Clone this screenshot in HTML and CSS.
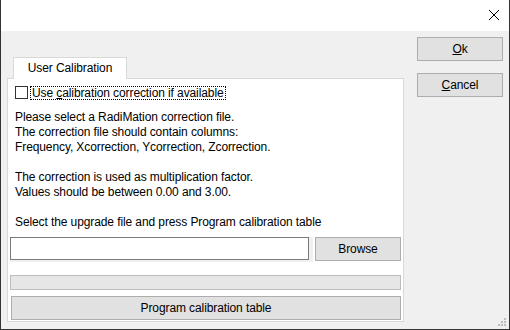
FILE: index.html
```html
<!DOCTYPE html>
<html lang="en">

<head>
    <meta charset="UTF-8">
    <title>User Calibration</title>
    <link rel="stylesheet" href="styles.css">
</head>

<body>
    <div class="window">
        <!-- Title bar -->
        <div class="titlebar">
            <svg class="close" width="12" height="12" viewBox="0 0 12 12">
                <path d="M1 1 L11 11 M11 1 L1 11" stroke="#000" stroke-width="1" fill="none" />
            </svg>
        </div>

        <div class="client">
            <!-- Tab control -->
            <div class="tabs">
                <div class="tab-strip">
                    <div class="tab active">User Calibration</div>
                </div>
                <div class="tab-page">
                    <label class="check-row">
                        <span class="checkbox"></span>
                        <span class="focus">Use <u>c</u>alibration correction if available</span>
                    </label>

                    <div class="info">
                        <p>Please select a RadiMation correction file.<br>
                            The correction file should contain columns:<br>
                            Frequency, Xcorrection, Ycorrection, Zcorrection.</p>
                        <p>The correction is used as multiplication factor.<br>
                            Values should be between 0.00 and 3.00.</p>
                        <p>Select the upgrade file and press Program calibration table</p>
                    </div>

                    <div class="file-row">
                        <div class="file-box"><input type="text" class="file-input"></div>
                        <button class="btn browse">Browse</button>
                    </div>

                    <div class="progress"></div>

                    <button class="btn program">Program calibration table</button>
                </div>
            </div>

            <!-- Dialog buttons -->
            <div class="side">
                <button class="btn"><u>O</u>k</button>
                <button class="btn"><u>C</u>ancel</button>
            </div>
        </div>

        <svg class="grip" width="10" height="10" viewBox="0 0 10 10">
            <rect x="7" y="1" width="2" height="2" fill="#bdbdbd" />
            <rect x="4" y="4" width="2" height="2" fill="#bdbdbd" />
            <rect x="7" y="4" width="2" height="2" fill="#bdbdbd" />
            <rect x="1" y="7" width="2" height="2" fill="#bdbdbd" />
            <rect x="4" y="7" width="2" height="2" fill="#bdbdbd" />
            <rect x="7" y="7" width="2" height="2" fill="#bdbdbd" />
        </svg>
    </div>
</body>

</html>
```

FILE: styles.css
```css
/* Basic Styles */
body {
    margin: 0;
    padding: 0;
    font-family: "Liberation Sans", Arial, sans-serif;
    font-size: 12px;
    letter-spacing: -0.1px;
    color: #000;
}

.window {
    position: relative;
    width: 510px;
    height: 330px;
    box-sizing: border-box;
    border: 1px solid #333;
    border-top: 0;
    display: flex;
    flex-direction: column;
    background-color: #f0f0f0;
}

.titlebar {
    height: 31px;
    background-color: #fff;
    position: relative;
    flex-shrink: 0;
}

.close {
    position: absolute;
    left: 487px;
    top: 9px;
}

.client {
    flex: 1;
    display: flex;
    padding: 6px 6px 7px 6px;
}

/* Tabs */
.tabs {
    width: 397px;
    display: flex;
    flex-direction: column;
    padding-top: 20px;
}

.tab-strip {
    display: flex;
    padding-left: 6px;
    height: 21px;
}

.tab {
    width: 114px;
    height: 22px;
    box-sizing: border-box;
    border: 1px solid #d9d9d9;
    border-bottom: 0;
    background-color: #fff;
    text-align: center;
    line-height: 20px;
    position: relative;
    z-index: 1;
}

.tab-page {
    flex: 1;
    background-color: #fff;
    border: 1px solid #d9d9d9;
    padding: 6px 1px 0 2px;
}

.check-row {
    display: flex;
    align-items: center;
    height: 15px;
    padding-left: 5px;
}

.checkbox {
    width: 11px;
    height: 11px;
    border: 1px solid #333;
    background-color: #fff;
    margin-right: 3px;
}

.focus {
    outline: 1px dotted #000;
    line-height: 12px;
    padding: 0 1px;
}

.info {
    padding: 10px 0 0 5px;
    line-height: 15px;
}

.info p {
    margin: 0 0 15px 0;
}

.info p:last-child {
    margin-bottom: 0;
}

.file-row {
    display: flex;
    justify-content: space-between;
    margin-top: 7px;
    padding-right: 1px;
}

.file-box {
    background-color: #f0f0f0;
    padding: 0 4px 2px 0;
}

.file-input {
    display: block;
    width: 299px;
    height: 23px;
    box-sizing: border-box;
    border: 1px solid #7a7a7a;
    background-color: #fff;
    margin: 0;
}

.btn {
    font-family: inherit;
    font-size: 12px;
    letter-spacing: -0.1px;
    color: #000;
    width: 86px;
    height: 24px;
    box-sizing: border-box;
    border: 1px solid #adadad;
    background-color: #e1e1e1;
    padding: 0;
    margin: 0;
}

.progress {
    height: 15px;
    box-sizing: border-box;
    margin: 13px 1px 0 0;
    border: 1px solid #bcbcbc;
    background-color: #e6e6e6;
}

.program {
    display: block;
    width: 390px;
    margin: 6px 0 0 1px;
}

/* Right side buttons */
.side {
    margin-left: 13px;
    display: flex;
    flex-direction: column;
    gap: 12px;
}

.grip {
    position: absolute;
    right: 2px;
    bottom: 2px;
}
```
